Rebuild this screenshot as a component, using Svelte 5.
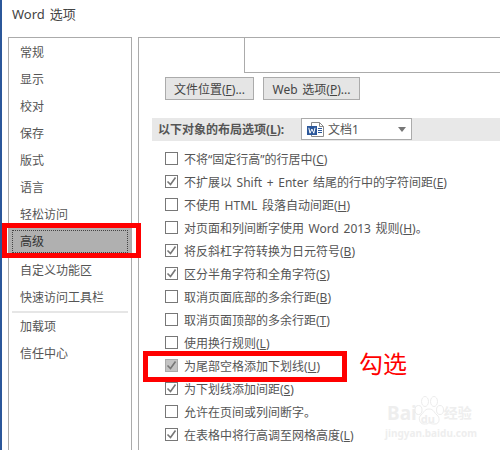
<script>
  const nav = [
    "常规", "显示", "校对", "保存", "版式", "语言", "轻松访问", "高级",
    "自定义功能区", "快速访问工具栏", "-", "加载项", "信任中心",
  ];

  // [label, mnemonic, tail, checked]
  const rows = [
    ["不将“固定行高”的行居中(", "C", ")", false],
    ["不扩展以 Shift + Enter 结尾的行中的字符间距(", "E", ")", true],
    ["不使用 HTML 段落自动间距(", "H", ")", false],
    ["对页面和列间断字使用 Word 2013 规则(", "H", ")。", false],
    ["将反斜杠字符转换为日元符号(", "B", ")", true],
    ["区分半角字符和全角字符(", "S", ")", true],
    ["取消页面底部的多余行距(", "B", ")", false],
    ["取消页面顶部的多余行距(", "T", ")", false],
    ["使用换行规则(", "L", ")", false],
    ["为尾部空格添加下划线(", "U", ")", true, true],
    ["为下划线添加间距(", "S", ")", true],
    ["允许在页间或列间断字。", "", "", false],
    ["在表格中将行高调至网格高度(", "L", ")", true],
  ];
</script>

<div class="window">
  <div class="title">Word 选项</div>

  <div class="body">
    <ul class="nav">
      {#each nav as item}
        {#if item === "-"}
          <li class="divider"></li>
        {:else}
          <li class:selected={item === "高级"}><span>{item}</span></li>
        {/if}
      {/each}
    </ul>

    <div class="panel">
      <div class="tab"></div>

      <div class="buttons">
        <button class="first">文件位置(<u>F</u>)...</button>
        <button class="second">Web 选项(<u>P</u>)...</button>
      </div>

      <div class="band">
        <b>以下对象的布局选项(<u>L</u>):</b>
        <div class="select">
          <svg width="17" height="15" viewBox="0 0 17 15">
            <path d="M4.5 .5h8l4 4v10h-12z" fill="#fff" stroke="#8a8a8a" />
            <path d="M12.5 .5v4h4" fill="none" stroke="#8a8a8a" />
            <path d="M11 6.5h4M11 8.5h4M11 10.5h4" stroke="#2b579a" />
            <rect x="0" y="4" width="10" height="9" fill="#2b579a" />
            <path d="M1.8 5.8l1.2 5.4 1.9-4.2 1.9 4.2 1.2-5.4" fill="none" stroke="#fff" />
          </svg>
          <span>文档1</span>
          <i class="arrow"></i>
        </div>
      </div>

      <div class="rows">
        {#each rows as [label, key, tail, checked, disabled]}
          <div class="row">
            <span class="box" class:disabled>
              {#if checked}
                <svg width="11" height="11" viewBox="0 0 11 11">
                  <path d="M1.5 5.5l3 3 5-7" fill="none" stroke="#777" stroke-width="1.6" />
                </svg>
              {/if}
            </span>
            <span>{label}<u>{key}</u>{tail}</span>
          </div>
        {/each}
      </div>
    </div>
  </div>

  <div class="mark one"></div>
  <div class="mark two"></div>
  <div class="note">勾选</div>

  <div class="watermark">
    <div class="brand">
      <span class="bai">Bai</span>
      <span class="paw">
        <svg width="30" height="30" viewBox="0 0 30 30" fill="#fff" stroke="#ececec">
          <ellipse cx="4.5" cy="14" rx="3.5" ry="4.5" />
          <ellipse cx="11" cy="5.5" rx="3.5" ry="5" />
          <ellipse cx="20" cy="5.5" rx="3.5" ry="5" />
          <ellipse cx="26" cy="14" rx="3.5" ry="4.5" />
          <path d="M15 13c-5 0-5 4-8 6s-2 9 3 9 3-1 5-1 1 1 6 1 5-7 2-9-3-6-8-6z" />
        </svg>
        <em>du</em>
      </span>
      <span class="jy">经验</span>
    </div>
    <div class="site">jingyan.baidu.com</div>
  </div>
</div>

<style>
  :global(body) {
    margin: 0;
    background: #fff;
  }

  .window {
    position: relative;
    width: 500px;
    height: 450px;
    overflow: hidden;
    box-sizing: border-box;
    border-left: 2px solid #2b579a;
    background: #fff;
    color: #555;
    font-family: "Noto Sans", "Noto Sans CJK SC", sans-serif;
    font-size: 12px;
    word-spacing: 1.5px;
  }

  .title {
    height: 37px;
    padding: 5px 0 0 10px;
    box-sizing: border-box;
    font-size: 13px;
    line-height: 18px;
    color: #444;
  }

  .body {
    display: flex;
    gap: 6px;
    padding-left: 6px;
  }

  .nav {
    width: 122px;
    height: 413px;
    flex: none;
    margin: 0;
    padding: 1px 0 0;
    box-sizing: content-box;
    list-style: none;
    border: 1px solid #ababab;
    border-bottom: 0;
  }

  .nav li {
    height: 27px;
    padding-left: 11px;
    line-height: 27px;
  }

  .nav li.selected {
    position: relative;
    margin-bottom: 2px;
    background: #b0b0b0;
    color: #333;
  }

  .nav li.selected::after {
    content: "";
    position: absolute;
    inset: 2px 3px;
    border: 1px dotted #444;
  }

  .nav li.divider {
    height: 2px;
    margin: 0 3px;
    padding: 0;
    background: #e6e6e6;
  }

  .panel {
    flex: 1;
    height: 413px;
    border: 1px solid #ababab;
    border-right: 0;
    border-bottom: 0;
  }

  .tab {
    height: 34px;
    margin-left: 105px;
    border-left: 1px solid #ababab;
    border-bottom: 1px solid #ababab;
  }

  .buttons {
    display: flex;
    gap: 9px;
    margin: 4px 0 0 26px;
  }

  button {
    height: 23px;
    padding: 0;
    box-sizing: border-box;
    border: 1px solid #ababab;
    background: #e5e5e5;
    color: #444;
    font: inherit;
    word-spacing: inherit;
  }

  .first {
    width: 89px;
  }

  .second {
    width: 97px;
  }

  .band {
    display: flex;
    height: 23px;
    margin: 18px 0 0 13px;
    padding-left: 6px;
    box-sizing: border-box;
    background: #e8e8e8;
    align-items: flex-start;
  }

  .band b {
    width: 143px;
    line-height: 23px;
    color: #555;
  }

  .select {
    display: flex;
    width: 111px;
    height: 22px;
    padding-left: 5px;
    box-sizing: border-box;
    align-items: center;
    gap: 4px;
    border: 1px solid #ababab;
    background: #fff;
  }

  .arrow {
    width: 0;
    height: 0;
    margin-left: auto;
    margin-right: 5px;
    border: 4px solid transparent;
    border-top: 5px solid #777;
    border-bottom: 0;
  }

  .rows {
    margin: 6px 0 0 26px;
  }

  .row {
    display: flex;
    height: 23px;
    align-items: center;
    gap: 6px;
    white-space: nowrap;
  }

  .box {
    display: flex;
    width: 13px;
    height: 13px;
    flex: none;
    box-sizing: border-box;
    align-items: center;
    justify-content: center;
    border: 1px solid #777;
    background: #fff;
  }

  .box.disabled {
    border-color: #aaa;
    background: #c4c4c4;
  }

  .mark {
    position: absolute;
    box-sizing: border-box;
    border: 5px solid #f00;
  }

  .mark.one {
    left: 0;
    top: 223px;
    width: 139px;
    height: 35px;
  }

  .mark.two {
    left: 141px;
    top: 351px;
    width: 204px;
    height: 31px;
  }

  .note {
    position: absolute;
    left: 357px;
    top: 349px;
    color: #f00;
    font-size: 24px;
    line-height: 30px;
  }

  .watermark {
    position: absolute;
    left: 383px;
    top: 396px;
    width: 90px;
    color: #eee;
    font-weight: 700;
    word-spacing: 0;
  }

  .brand {
    display: flex;
    height: 30px;
    align-items: flex-end;
    line-height: 20px;
    white-space: nowrap;
  }

  .bai {
    font-size: 19px;
    margin: 0 0 3px 2px;
  }

  .paw {
    position: relative;
    width: 30px;
    height: 30px;
    flex: none;
    margin-left: -3px;
  }

  .paw em {
    position: absolute;
    left: 7px;
    top: 17px;
    font-size: 11px;
    line-height: 11px;
    font-style: normal;
  }

  .jy {
    font-size: 14px;
    margin-bottom: 3px;
  }

  .site {
    margin-top: 2px;
    font-size: 10px;
    line-height: 11px;
    white-space: nowrap;
  }
</style>
